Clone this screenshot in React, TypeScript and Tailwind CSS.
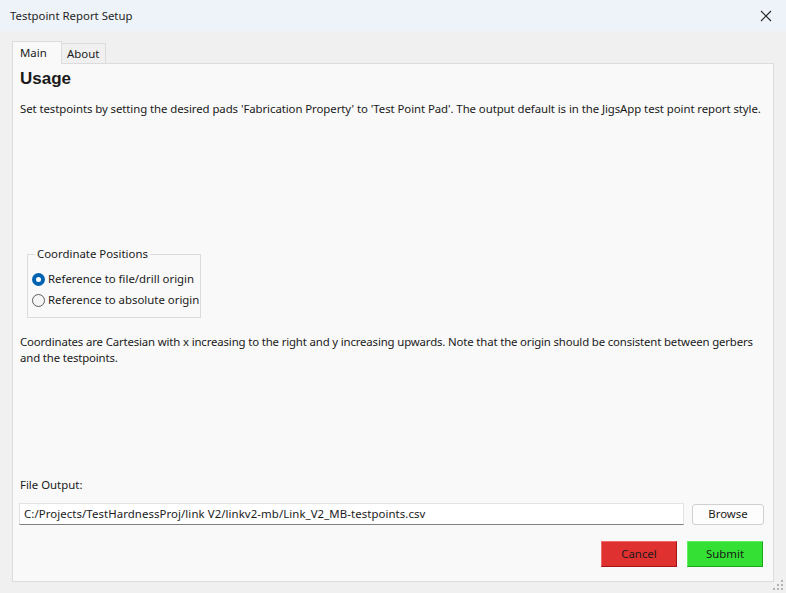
export default function App() {
  return (
    <div className="relative w-[786px] h-[593px] bg-[#f0f0f0] flex flex-col overflow-hidden text-[#1a1a1a] font-['Noto_Sans',sans-serif] text-[11.4px]">
      {/* Title bar */}
      <div className="h-[31px] bg-[#eef3f9] flex items-center justify-between pl-[10px] pr-[14px] shrink-0">
        <span className="text-[#1f1f1f]">Testpoint Report Setup</span>
        <svg width="12" height="12" viewBox="0 0 12 12" className="stroke-[#222]">
          <path d="M1 1L11 11M11 1L1 11" strokeWidth="1.1" fill="none" />
        </svg>
      </div>

      <div className="flex-1 flex flex-col px-[12px] pt-[10px] pb-[11px]">
        {/* Tabs */}
        <div className="flex items-end h-[22px]">
          <div className="h-[23px] w-[50px] bg-[#f9f9f9] border border-b-0 border-[#dcdcdc] flex items-center pl-[7px] relative z-10 -mb-px">
            Main
          </div>
          <div className="h-[20px] w-[44px] bg-[#f0f0f0] border border-l-0 border-b-0 border-[#dcdcdc] flex items-center pl-[5px]">
            About
          </div>
        </div>

        {/* Panel */}
        <div className="flex-1 bg-[#f9f9f9] border border-[#dcdcdc] flex flex-col px-[6px]">
          <h1 className="font-['Liberation_Sans',sans-serif] font-bold text-[17px] mt-[4px] ml-[1px] leading-[22px]">Usage</h1>
          <p className="mt-[11px] ml-[1px] leading-[16px] whitespace-nowrap tracking-[-0.07px]">
            Set testpoints by setting the desired pads 'Fabrication Property' to 'Test Point Pad'. The output default is in the JigsApp test point report style.
          </p>

          {/* Group box */}
          <fieldset className="mt-[130px] ml-[8px] w-[174px] h-[71px] border border-[#dcdcdc] pl-[4px] whitespace-nowrap">
            <legend className="px-[2px] ml-[3px] leading-[14px]">Coordinate Positions</legend>
            <div className="flex flex-col gap-[5px] mt-[10px]">
              <label className="flex items-center gap-[3px] leading-[16px]">
                <span className="w-[13px] h-[13px] rounded-full bg-[#0063b1] flex items-center justify-center">
                  <span className="w-[5px] h-[5px] rounded-full bg-white" />
                </span>
                Reference to file/drill origin
              </label>
              <label className="flex items-center gap-[3px] leading-[16px]">
                <span className="w-[13px] h-[13px] rounded-full border border-[#5c5c5c] bg-[#f5f5f5]" />
                Reference to absolute origin
              </label>
            </div>
          </fieldset>

          <p className="mt-[16px] ml-[1px] leading-[16px] tracking-[-0.15px]">
            Coordinates are Cartesian with x increasing to the right and y increasing upwards. Note that the origin should be consistent between gerbers and the testpoints.
          </p>

          <div className="flex-1" />

          <div className="leading-[16px] ml-[1px]">File Output:</div>
          <div className="flex items-center gap-[8px] mt-[10px]">
            <div className="w-[665px] h-[22px] bg-white border border-[#e3e3e3] border-b-[#808080] flex items-center pl-[4px] whitespace-nowrap tracking-[0.08px]">
              C:/Projects/TestHardnessProj/link V2/linkv2-mb/Link_V2_MB-testpoints.csv
            </div>
            <div className="w-[72px] h-[21px] bg-[#fdfdfd] border border-[#d0d0d0] rounded-[3px] flex items-center justify-center">
              Browse
            </div>
          </div>

          <div className="flex justify-end gap-[10px] mt-[16px] mb-[14px] pr-[4px]">
            <div className="w-[76px] h-[26px] bg-[#e03131] border border-[#a31515] border-t-[#f06868] border-l-[#f06868] flex items-center justify-center">
              Cancel
            </div>
            <div className="w-[76px] h-[26px] bg-[#33e033] border border-[#1aa81a] border-t-[#5ef05e] border-l-[#5ef05e] flex items-center justify-center">
              Submit
            </div>
          </div>
        </div>
      </div>

      {/* Resize grip */}
      <svg width="10" height="10" viewBox="0 0 10 10" className="absolute right-[3px] bottom-[3px] fill-[#b4b4b4]">
        <rect x="8" y="0" width="2" height="2" />
        <rect x="4" y="4" width="2" height="2" />
        <rect x="8" y="4" width="2" height="2" />
        <rect x="0" y="8" width="2" height="2" />
        <rect x="4" y="8" width="2" height="2" />
        <rect x="8" y="8" width="2" height="2" />
      </svg>
    </div>
  );
}
